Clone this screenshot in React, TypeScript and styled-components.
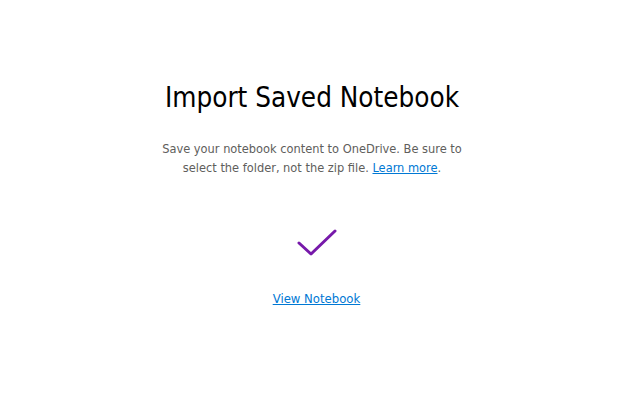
import React from "react";
import styled, { createGlobalStyle } from "styled-components";

const Global = createGlobalStyle`
  html, body { margin: 0; padding: 0; background: #ffffff; }
  body { font-family: "DejaVu Sans Condensed", "DejaVu Sans", sans-serif; }
`;

const Page = styled.main`
  width: 633px;
  height: 420px;
  display: flex;
  flex-direction: column;
  align-items: center;
  padding-top: 79px;
  box-sizing: border-box;
`;

const Title = styled.h1`
  margin: 0;
  padding-right: 9px;
  font-size: 27.6px;
  font-weight: 400;
  line-height: 38px;
  color: #000;
`;

const Description = styled.p`
  margin: 22px 0 0;
  padding-right: 9px;
  width: 320px;
  text-align: center;
  font-size: 12.7px;
  line-height: 19px;
  color: #605e5c;
`;

const Link = styled.a`
  color: #0078d4;
  text-decoration: underline;
  cursor: pointer;
`;

const CheckWrap = styled.div`
  margin-top: 52px;
  width: 40px;
  height: 30px;
  display: flex;
  align-items: center;
  justify-content: center;
`;

const ViewLink = styled(Link)`
  margin-top: 31px;
  font-size: 13px;
  line-height: 18px;
`;

export default function App() {
  return (
    <>
      <Global />
      <Page>
        <Title>Import Saved Notebook</Title>
        <Description>
          Save your notebook content to OneDrive. Be sure to select the folder, not the zip file.{" "}
          <Link>Learn more</Link>.
        </Description>
        <CheckWrap>
          <svg width="40" height="30" viewBox="0 0 40 30">
            <polyline
              points="2,14 14,25 38,2"
              fill="none"
              stroke="#7719aa"
              strokeWidth="3"
              strokeLinecap="round"
              strokeLinejoin="round"
            />
          </svg>
        </CheckWrap>
        <ViewLink>View Notebook</ViewLink>
      </Page>
    </>
  );
}
